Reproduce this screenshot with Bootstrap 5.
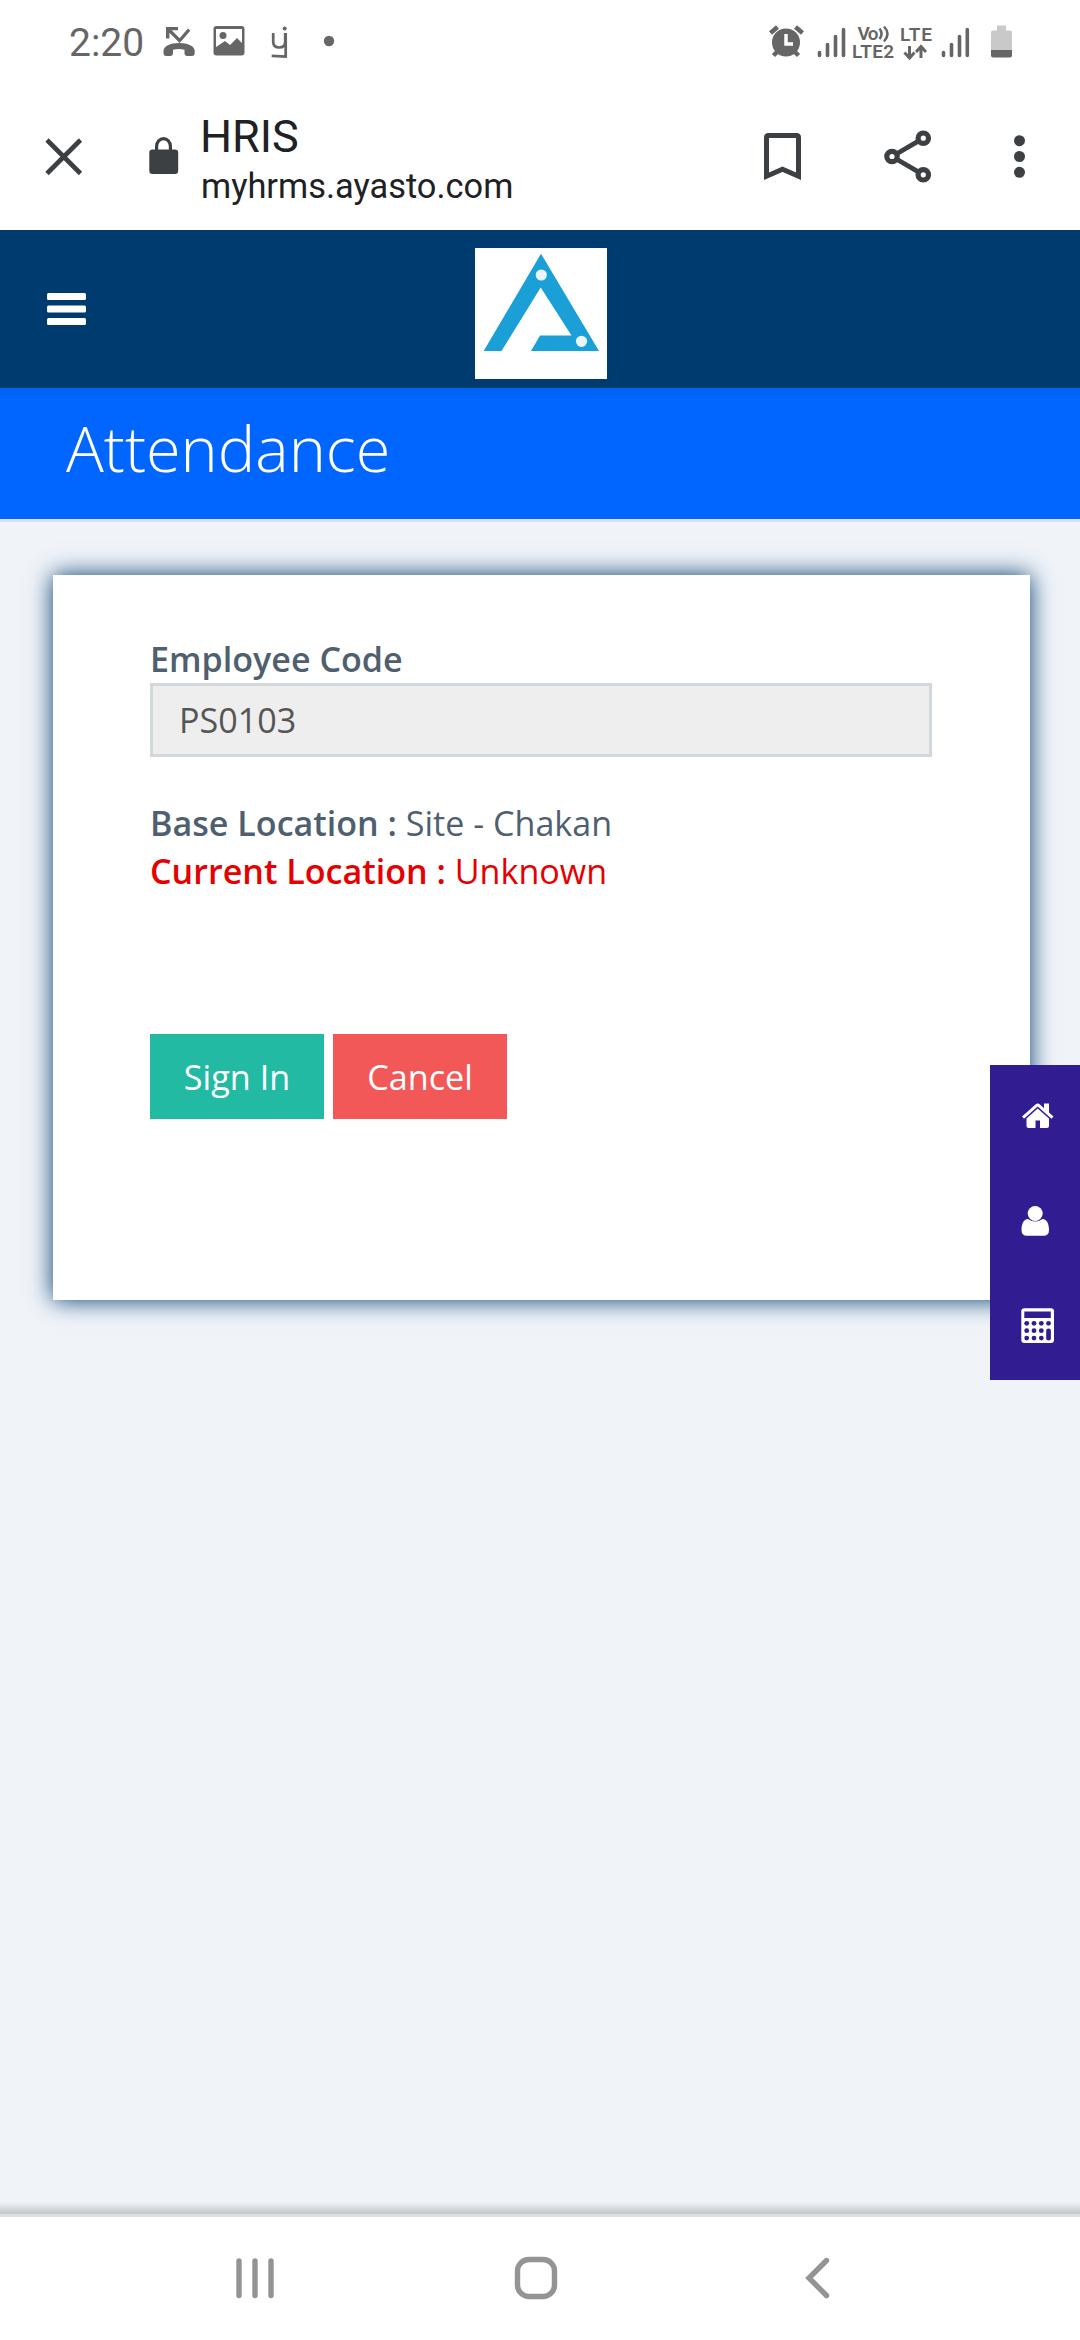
<!DOCTYPE html>
<html lang="en">
<head>
<meta charset="utf-8">
<meta name="viewport" content="width=device-width, initial-scale=1">
<title>HRIS</title>
<link href="https://cdn.jsdelivr.net/npm/bootstrap@5.3.0/dist/css/bootstrap.min.css" rel="stylesheet">
<style>
body{width:1080px;height:2340px;background:#f0f4f9;font-family:"Open Sans",sans-serif;color:#4f5f6f;overflow:hidden}
svg{display:block;flex:none}
.status-row{height:80px;padding:0 68px 0 69px;background:#fff;font-family:Roboto,sans-serif;color:#666;fill:#666}
.clock{font-size:39px;line-height:46px;margin-top:20px;width:94px}
.tool-row{height:150px;background:#fff;font-family:Roboto,sans-serif;color:#202124}
.site-title{font-size:45px;line-height:52px;margin-top:31px;margin-left:-2px}
.site-host{font-size:34.4px;line-height:40px;margin:3px 0 0 -1px}
.app-head{height:158px;background:#003b6f;padding:0 473px 0 47px}
.page-head{height:134px;background:linear-gradient(#0060f2,#06f 10px);background-color:#06f;border-bottom:3px solid #d7e2f5;padding-left:66px;color:#fff}
.page-head h1{font-size:63px;font-weight:300;line-height:86px;margin:17px 0 0}
.att-card{margin:53px 50px 0 53px;height:725px;background:#fff;border:0;border-radius:0;padding:60px 98px 0 97px;box-shadow:0 0 23px #003b6f;font-size:34.1px;line-height:48px;color:#4f5f6f}
.att-card label,.att-card b{font-weight:600}
.att-card .form-control{height:74px;border:3px solid #d3d8dc;border-radius:0;background:#eee;color:#555;font-size:34.1px;line-height:48px;padding:10px 26px}
.loc{margin-top:42px}
.loc-now{color:#e60000}
.acts{margin-top:139px;gap:9px}
.acts .btn{width:174px;height:85px;border:0;border-radius:0;font-size:34.2px;color:#fff;padding:0}
.b-in{background:#23baa3}.b-no{background:#f25858}
.side-dock{position:fixed;right:0;top:1065px;width:90px;height:315px;background:#311c91;fill:#fff}
.side-dock a{height:105px;padding-left:31px}
.nav-row{height:126px;background:#fff;border-top:3px solid #e0e0e0;position:relative}
.nav-row::before{content:"";position:absolute;left:0;right:0;top:-15px;height:12px;background:linear-gradient(#c2c6ca00,#c2c6ca)}
</style>
<script src="https://cdn.jsdelivr.net/npm/bootstrap@5.3.0/dist/js/bootstrap.bundle.min.js"></script>
</head>
<body class="d-flex flex-column">
<div class="status-row d-flex">
  <div class="clock">2:20</div>
  <svg width="180" height="80" viewBox="163 0 180 80">
    <path d="M166 27h12v3.300h-6.400l8 8 8.300-9.800 2.400 2.200-10.600 12.200-10.300-10.200v5.800H166z"/>
    <path d="M163.500 53v-2c0-4.800 6.500-8 15.500-8s15.700 3.200 15.700 8v2q0 3-3 3h-4.500q-2.700 0-2.700-3v-3.300c-4-1.100-7.500-1.100-11.500 0V53q0 3-2.700 3h-4q-2.800 0-2.800-3z"/>
    <path fill-rule="evenodd" d="M216.500 26h25q3 0 3 3v23.500q0 3-3 3h-25q-3 0-3-3V29q0-3 3-3zM216 29v18l9-6 5 4 7-7 5 5V29z"/><circle cx="223" cy="35.500" r="3.500"/>
    <path d="M273.200 33v8.500q0 6 6 6t6-6V33M285.700 33v23.500l-14-.6" fill="none" stroke="#666" stroke-width="2.700"/><circle cx="284.700" cy="28.500" r="2"/>
    <circle cx="329" cy="41" r="5.200"/>
  </svg>
  <svg class="ms-auto" width="243" height="80" viewBox="769 0 243 80">
    <g fill="none" stroke="#666" stroke-width="4.500"><path d="M770.500 33l7-6M802.500 33l-7-6M779 50l-5.500 5.500M793 50l5.500 5.500"/></g>
    <circle cx="786" cy="42.500" r="14"/><path d="M786 34v10h7" fill="none" stroke="#fff" stroke-width="3.500"/>
    <g fill="none" stroke="#666" stroke-width="3.600" stroke-linecap="round"><path d="M819.500 55.500v-3M827.500 55.500v-11M835.500 55.500v-19M843.500 55.500V29.500M943.500 55.500v-3M951.500 55.500v-11M959.500 55.500v-19M967.300 55.500V29.500"/></g>
    <g font-family="Roboto" font-weight="600" font-size="19"><text x="857.500" y="40" textLength="21">Vo</text><text x="852" y="57.500" textLength="42">LTE2</text><text x="900" y="40.800" textLength="32">LTE</text></g>
    <path d="M879.500 28.500q4 5 0 10.500M884 26.500q7 7.500 0 15" fill="none" stroke="#666" stroke-width="2.500"/>
    <path d="M909.500 46v11M904.500 52.500l5 5.500 5-5.500M921 58V47.500M916 52l5-5.500 5 5.500" fill="none" stroke="#666" stroke-width="3"/>
    <path d="M997 25.500h9v5h4q2 0 2 2V50h-21V32.500q0-2 2-2h4z" fill="#c9c9c9"/><path d="M991 50h21v5.500q0 2-2 2h-17q-2 0-2-2z"/>
  </svg>
</div>
<div class="tool-row d-flex">
  <svg width="202" height="150" viewBox="0 80 202 150" fill="#3c4043">
    <path d="M47 140l33.500 33.500M80.500 140L47 173.500" stroke="#3c4043" stroke-width="4.600"/>
    <path fill-rule="evenodd" d="M155 149.500v-3.300a8.500 9.200 0 0 1 17 0v3.300h3q3.200 0 3.200 3.200v18q0 3.200-3.200 3.200h-22.500q-3.200 0-3.200-3.200v-18q0-3.200 3.200-3.200zM158.200 149.500h10.600v-3a5.300 6.300 0 0 0-10.600 0z"/>
  </svg>
  <div class="flex-grow-1"><div class="site-title">HRIS</div><div class="site-host">myhrms.ayasto.com</div></div>
  <svg width="320" height="150" viewBox="760 80 320 150" fill="none" stroke="#3c4043">
    <path d="M766.500 176.200V137.500q0-2 2-2h28q2 0 2 2v38.700l-16-7z" stroke-width="5"/>
    <path d="M892 156.500l31.500-18.300M892 156.500l31.500 18.300" stroke-width="4.800"/>
    <g stroke-width="5.200" fill="#fff"><circle cx="892" cy="156.500" r="5.200"/><circle cx="923.300" cy="138.200" r="5.200"/><circle cx="923.300" cy="174.800" r="5.200"/></g>
    <g stroke="none" fill="#3c4043"><circle cx="1019.500" cy="140.700" r="5.500"/><circle cx="1019.500" cy="156.500" r="5.500"/><circle cx="1019.500" cy="172.300" r="5.500"/></g>
  </svg>
</div>
<header class="app-head d-flex justify-content-between">
  <svg width="39" height="158" viewBox="47 230 39 158" fill="#fff"><rect x="47" y="293" width="39" height="7" rx="1.500"/><rect x="47" y="305.500" width="39" height="7" rx="1.500"/><rect x="47" y="318" width="39" height="7" rx="1.500"/></svg>
  <svg width="132" height="158" viewBox="475 230 132 158"><path fill="#fff" d="M475 248h132v131H475z"/><path fill="#1a9fd6" d="M541 253.700L599 351h-68l9-15.500h31.500L540.700 287.500 501.500 351H483.700z"/><g fill="#eaf6fc"><circle cx="541.300" cy="275" r="5.600"/><circle cx="581.500" cy="341.300" r="5.600"/></g></svg>
</header>
<div class="page-head d-flex align-items-start"><h1>Attendance</h1></div>
<main class="flex-grow-1">
  <div class="card att-card">
    <label for="emp">Employee Code</label>
    <input id="emp" class="form-control" value="PS0103" readonly>
    <div class="loc"><b>Base Location :</b> Site - Chakan</div>
    <div class="loc-now"><b>Current Location :</b> Unknown</div>
    <div class="acts d-flex"><button class="btn b-in">Sign In</button><button class="btn b-no">Cancel</button></div>
  </div>
</main>
<nav class="side-dock d-flex flex-column">
  <a><svg width="36" height="105" viewBox="1021 1065 36 105"><path d="M1022 1116.500L1035.500 1104.500q2.200-1.800 4.400 0l4.100 3.700v-4.700h5v9l4.500 4-2 2.300L1037.700 1106.500 1024 1118.800z"/><path d="M1026.500 1118.500l11.200-10 11.300 10v7.500q0 2-2 2h-7v-7.500h-4.500v7.500h-7q-2 0-2-2z"/></svg></a>
  <a><svg width="36" height="105" viewBox="1021 1170 36 105"><path d="M1028 1219c-4.500 0-6.500 5-6.500 11q0 5.800 5.500 5.800h16.500q5.500 0 5.500-5.800c0-6-2-11-6.500-11q-7.300 5-14.500 0z"/><circle cx="1035.200" cy="1213.500" r="7.500"/></svg></a>
  <a><svg width="36" height="105" viewBox="1021 1275 36 105"><rect x="1021.300" y="1308.300" width="32.700" height="34.700" rx="3"/><g fill="#311c91"><path d="M1024.300 1311.500h26.500v6.500h-26.500z"/><g id="keys"><circle cx="1026.700" cy="1323.300" r="2.400"/><circle cx="1034" cy="1323.300" r="2.400"/><circle cx="1041.300" cy="1323.300" r="2.400"/></g><use href="#keys" y="7.400"/><use href="#keys" y="14.800"/><circle cx="1048.500" cy="1323.300" r="2.400"/><rect x="1046.200" y="1328.500" width="4.700" height="12" rx="2.300"/></g></svg></a>
</nav>
<div class="nav-row">
  <svg width="1080" height="123" viewBox="0 2217 1080 123" fill="none" stroke="#949494" stroke-width="5.400" stroke-linecap="round"><path d="M239 2261v34.500M255 2261v34.500M271 2261v34.500"/><rect x="517.500" y="2259.500" width="37" height="37" rx="11.500"/><path d="M826.500 2260.500L809 2278l17.500 17.500"/></svg>
</div>
</body>
</html>
